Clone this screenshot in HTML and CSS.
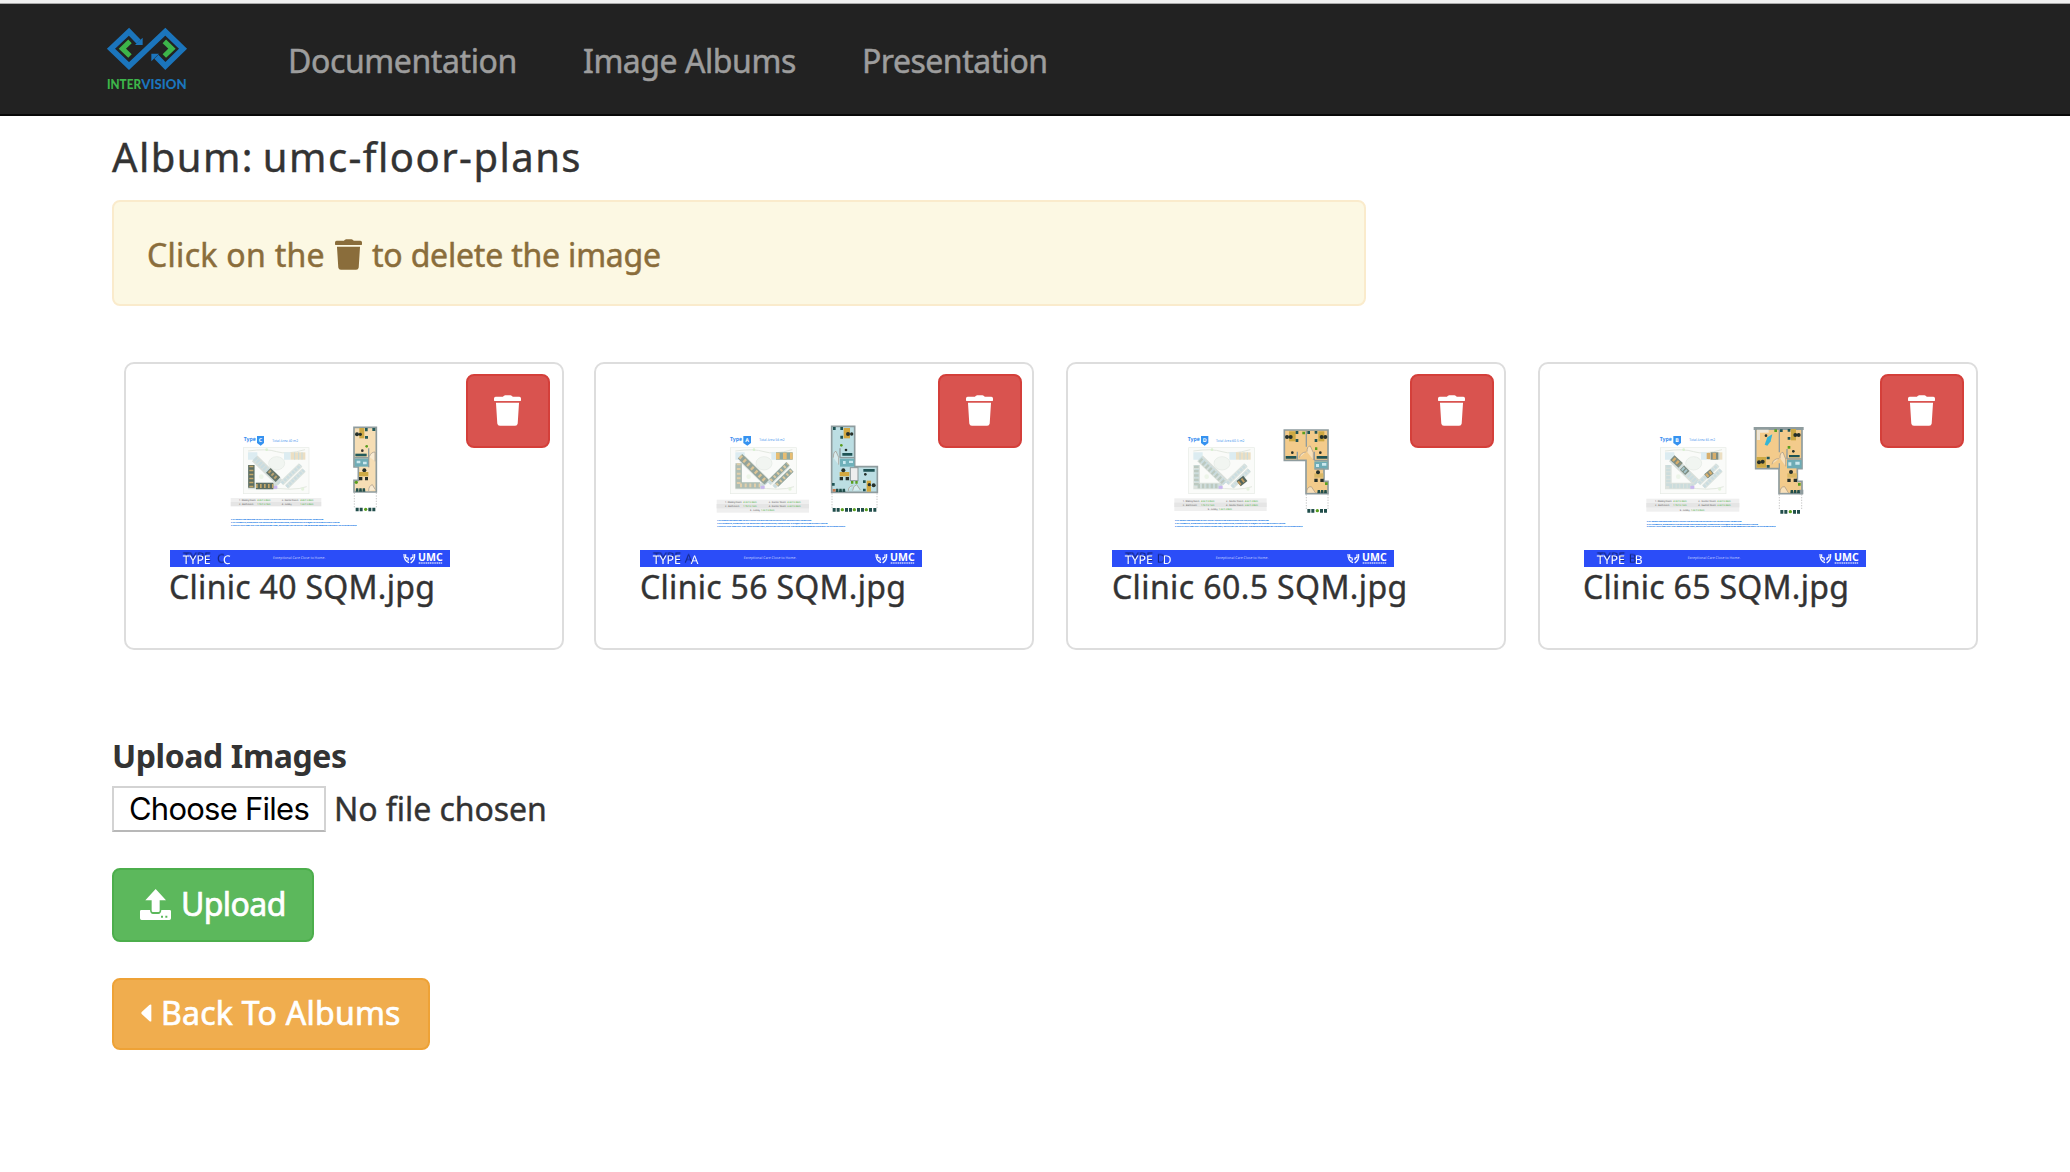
FILE: index.html
```html
<!DOCTYPE html>
<html lang="en">
<head>
<meta charset="utf-8">
<title>Album: umc-floor-plans</title>
<link rel="stylesheet" href="styles.css">
</head>
<body>
<svg class="defs" aria-hidden="true">
  <defs>
    <symbol id="trash" viewBox="0 0 82 93">
      <path d="M5 5H27Q30 0 34 0H50Q54 0 57 5H77Q82 5 82 10V15Q82 18 78 18H4Q0 18 0 15V10Q0 5 5 5ZM6 23H76L72 86Q71 93 64 93H18Q11 93 10 86Z" fill="currentColor"/>
    </symbol>
    <g id="site">
      <rect x="370" y="278" width="197" height="138" fill="#fafbf9" stroke="#e6ebe4" stroke-width="2"/>
      <path d="M384 288Q440 280 470 290T555 284M440 395Q520 410 560 395" fill="none" stroke="#e3e8e0" stroke-width="3"/>
      <ellipse cx="470" cy="325" rx="24" ry="20" fill="#f1f5f1" stroke="#e3e9e3" stroke-width="2"/>
      <path d="M384 292h28v22h-28zM492 292h20v22h-20z" fill="#dcecf1"/>
      <path d="M512 292h44v22h-44z" fill="#ecdfc3"/>
      <path d="M524 292v22M536 292v22M546 292v22" stroke="#c6dce0" stroke-width="3"/>
      <path d="M404 310L480 384" stroke="#d9dfda" stroke-width="24"/>
      <path d="M404 310L480 384" stroke="#c9dce0" stroke-width="15" stroke-dasharray="7 3"/>
      <path d="M485 385L542 330M500 396L552 345" stroke="#dde4df" stroke-width="15"/>
      <path d="M485 385L542 330M500 396L552 345" stroke="#cbdde1" stroke-width="9" stroke-dasharray="8 3"/>
      <path d="M394 330V393H470" fill="none" stroke="#dce2dd" stroke-width="20"/>
      <path d="M394 330V393H470" fill="none" stroke="#cbdcdc" stroke-width="13" stroke-dasharray="8 3"/>
      <circle cx="424" cy="365" r="7" fill="#edf5e9"/><circle cx="548" cy="402" r="5" fill="#e4f2dd"/><circle cx="440" cy="284" r="4" fill="#d9efd0"/>
      <path d="M460 397h12" stroke="#c9b7ef" stroke-width="9"/>
    </g>
    <g id="notes" class="notes">
      <text x="333" y="496" textLength="277" lengthAdjust="spacingAndGlyphs">* ALL ROOMS ARE MEASURED TO WALL FINISH AND EXCLUDE THE STANDARD AND CONSTRUCTION TOLERANCES</text>
      <text x="333" y="504" textLength="325" lengthAdjust="spacingAndGlyphs">* ALL MATERIALS, DIMENSIONS AND DRAWINGS ARE APPROXIMATE, INFORMATION IS SUBJECT TO CHANGE WITHOUT NOTICE</text>
      <text x="333" y="512" textLength="377" lengthAdjust="spacingAndGlyphs">* ACTUAL UNIT AREA MAY VARY FROM STATED AREA, DRAWINGS NOT TO SCALE. THE DEVELOPER RESERVES THE RIGHT TO MAKE REVISIONS</text>
    </g>
    <g id="umc" fill="#fff">
      <path d="M852 597q-1 20 15 26M857 598v9l9 3M866 611l-3 6M884 597q2 18-12 27M879 598v9l-8 3M875 608l-3 7" fill="none" stroke="#fff" stroke-width="3.5"/>
      <text x="894" y="618" font-size="32" font-weight="700" textLength="74" lengthAdjust="spacingAndGlyphs">UMC</text>
      <path d="M896 624h72" stroke="#c9d2ff" stroke-width="4" stroke-dasharray="4 1.5"/>
    </g>
    <g id="seats" fill="#214e4b"><path d="M0 0h7l1 10h-9zM10 0h7l1 10h-9zM20 0h7l1 10h-9z"/></g>
    <g id="bench"><g fill="#214e4b"><path d="M2 0h9v11H2zM14 0h9v11h-9zM40 0h9v11h-9zM52 0h9v11h-9z"/></g><circle cx="32" cy="5" r="5" fill="#5a9e1f"/></g>
  </defs>
</svg>

<div class="browser-edge"></div>
<nav class="navbar">
  <a class="brand">
    <svg width="80" height="62" viewBox="0 0 240 186" aria-label="Intervision">
      <g fill="none" stroke="#1b75bc" stroke-width="17">
        <path d="M95 41L66 11L12 62L66 114L175 11L228 62L175 114L148 86"/>
      </g>
      <path d="M107 29V51H84ZM133 77H156L133 100Z" fill="#1b75bc"/>
      <path d="M69 40L46 62L69 84M172 40L195 62L172 84" fill="none" stroke="#3db54a" stroke-width="15"/>
      <text x="0" y="182" fill="#3db54a" textLength="102" lengthAdjust="spacingAndGlyphs">INTER</text>
      <text x="103" y="182" fill="#1b75bc" textLength="136" lengthAdjust="spacingAndGlyphs">VISION</text>
    </svg>
  </a>
  <a class="nav-link docs">Documentation</a>
  <a class="nav-link albums">Image Albums</a>
  <a class="nav-link pres">Presentation</a>
</nav>

<main class="page">
  <h3 class="title">Album: umc-floor-plans</h3>
  <div class="alert"><span class="alert-a">Click on the</span><svg class="alert-icon"><use href="#trash"/></svg><span class="alert-b">to delete the image</span></div>

  <div class="cards">
    <div class="card">
      <button class="delete"><svg class="trash"><use href="#trash"/></svg></button>
      <svg class="thumb" width="280" height="152" viewBox="150 180 840 456">
        <use href="#site"/>
        <path d="M394 330V398M408 393H460" stroke="#5d6e62" stroke-width="19"/><path d="M394 332V398M408 393H460" stroke="#c4a76a" stroke-width="12" stroke-dasharray="5 7"/>
        <path d="M445 346L474 374" stroke="#66766b" stroke-width="20"/><path d="M447 348L472 372" stroke="#bba371" stroke-width="10" stroke-dasharray="6 6"/>
        <text class="ty" x="371" y="259" textLength="36" lengthAdjust="spacingAndGlyphs">Type</text><path class="badge" d="M411 243h21v21l-10 8-11-8z"/><text class="bl" x="416" y="261">C</text>
        <text class="area" x="457" y="260" textLength="77" lengthAdjust="spacingAndGlyphs">Total Area 40 m2</text>
        <rect x="332" y="429" width="272" height="12" fill="#efefef"/><rect x="332" y="441" width="272" height="13" fill="#e5e5e5"/>
        <g class="dims"><text x="357" y="438" textLength="50">1 - Waiting Room</text><text class="g" x="412" y="438" textLength="39">4.25 X 2.80m</text><text x="485" y="438" textLength="50">3 - Doctor Room</text><text class="g" x="541" y="438" textLength="39">4.05 X 2.80m</text><text x="357" y="450" textLength="43">2 - Bathroom</text><text class="g" x="412" y="450" textLength="39">1.70 X 2.15m</text><text x="485" y="450" textLength="30">4 - Lobby</text><text class="g" x="541" y="450" textLength="39">1.20 X 2.80m</text></g>
        <use href="#notes"/>
        <path class="wall cream" d="M702 217H769V411H702V376H715V336H702Z"/>
        <rect x="704" y="310" width="43" height="25" fill="#70adb7"/><path class="inner" d="M704 308H746V280M746 310V337"/>
        <rect x="718" y="219" width="15" height="31" fill="#cda944"/><g fill="#26302a"><circle cx="711" cy="238" r="6"/><circle cx="721" cy="238" r="5"/><circle cx="733" cy="346" r="6"/><path d="M717 366h10v10h-10zM735 366h9v10h-9z"/></g>
        <rect x="717" y="351" width="28" height="13" fill="#cda944"/><path d="M735 219h8v10h-8zM757 219h9v9h-9zM735 243h9v8h-9z" fill="#235a5a"/><path d="M706 300h34" stroke="#235a5a" stroke-width="8"/>
        <circle cx="740" cy="274" r="4" fill="#5a9e1f"/><circle cx="709" cy="382" r="5" fill="#5a9e1f"/><circle cx="727" cy="287" r="4" fill="#333"/><path d="M710 317h11v8h-11zM729 320h11v8h-11z" fill="#cce8ee"/>
        <path class="door" d="M748 305q5-14 17-14v28M746 408q0-16 11-19l9 15"/><use href="#seats" x="708" y="400"/>
        <path class="lot" d="M703 413V460M769 413V460"/><use href="#bench" x="705" y="458"/>
        <rect class="band" x="150" y="585" width="840" height="51"/><text class="tp" x="188" y="626" textLength="84" lengthAdjust="spacingAndGlyphs">TYPE</text><text class="tp letter" x="309" y="626">C</text>
        <text class="slogan" x="459" y="613" textLength="157" lengthAdjust="spacingAndGlyphs">Exceptional Care Close to Home.</text><use href="#umc"/>
      </svg>
      <div class="name">Clinic 40 SQM.jpg</div>
    </div>

    <div class="card near">
      <button class="delete"><svg class="trash"><use href="#trash"/></svg></button>
      <svg class="thumb" width="282" height="152" viewBox="150 180 846 456">
        <use href="#site" x="52"/>
        <g fill="none"><path d="M450 304L530 382" stroke="#93a39a" stroke-width="19"/><path d="M450 304L530 382" stroke="#dcc495" stroke-width="12" stroke-dasharray="7 9"/><path d="M542 377L594 326M560 390L606 345" stroke="#94a79f" stroke-width="14"/><path d="M542 377L594 326M560 390L606 345" stroke="#dfcaa0" stroke-width="9" stroke-dasharray="6 8"/><path d="M446 325V391H510" stroke="#aebdb3" stroke-width="19"/><path d="M446 325V391H510" stroke="#e1cfaa" stroke-width="11" stroke-dasharray="6 8"/><path d="M558 303h50" stroke="#8fa99f" stroke-width="22"/><path d="M558 303h50" stroke="#e7bd72" stroke-width="20" stroke-dasharray="11 10"/></g>
        <text class="ty" x="420" y="258" textLength="36" lengthAdjust="spacingAndGlyphs">Type</text><path class="badge" d="M460 243h23v21l-11 8-12-8z"/><text class="bl" x="466" y="260">A</text>
        <text class="area" x="508" y="259" textLength="76" lengthAdjust="spacingAndGlyphs">Total Area 56 m2</text>
        <rect x="380" y="434" width="277" height="39" fill="#efefef"/><rect x="380" y="447" width="277" height="13" fill="#e5e5e5"/>
        <g class="dims"><text x="405" y="444" textLength="50">1 - Waiting Room</text><text class="g" x="460" y="444" textLength="40">4.20 X 2.80m</text><text x="536" y="444" textLength="52">3 - Doctor Room</text><text class="g" x="592" y="444" textLength="40">4.00 X 2.80m</text><text x="405" y="456" textLength="43">2 - Bathroom</text><text class="g" x="460" y="456" textLength="40">1.70 X 2.10m</text><text x="536" y="456" textLength="52">4 - Doctor Room</text><text class="g" x="592" y="456" textLength="40">3.00 X 2.80m</text><text x="480" y="469" textLength="30">5 - Lobby</text><text class="g" x="513" y="469" textLength="40">1.20 X 2.80m</text></g>
        <use href="#notes" transform="translate(43 3) scale(1.017 1)"/>
        <path class="wall blue" d="M725 214H794V335H862V412H725Z"/>
        <rect x="750" y="311" width="43" height="24" fill="#6fb1ba"/><path class="inner" d="M750 308V280M750 308H793"/><rect x="781" y="338" width="23" height="39" fill="#eee" stroke="#8b9798" stroke-width="3"/>
        <rect x="761" y="219" width="19" height="31" fill="#d3a840"/><rect x="749" y="351" width="29" height="13" fill="#d3a840"/><rect x="830" y="377" width="13" height="33" fill="#d3a840"/>
        <g fill="#26302a"><circle cx="774" cy="237" r="6"/><circle cx="785" cy="237" r="5"/><circle cx="760" cy="346" r="6"/><circle cx="768" cy="285" r="4"/><circle cx="826" cy="358" r="4"/><circle cx="838" cy="389" r="5"/><circle cx="851" cy="391" r="6"/><path d="M749 366h10v10h-10zM767 366h10v10h-10z"/></g>
        <path d="M729 216h8v9h-8zM751 216h8v9h-8zM751 242h8v9h-8zM819 376h8v8h-8zM819 401h8v8h-8zM726 384h8v8h-8zM757 294h30v8h-30zM820 342h34v8h-34z" fill="#205455"/>
        <circle cx="754" cy="271" r="4" fill="#5a9e1f"/><path d="M783 382h7M796 382h7" stroke="#5a9e1f" stroke-width="8"/><path d="M759 318h8v9h-8zM777 317h12v7h-12z" fill="#c8e9f0"/>
        <path class="door" d="M730 308q0-18 8-19l8 18v22M775 408q0-14 13-16M788 407q1-15 12-18l11 16"/><use href="#seats" x="738" y="401"/><path d="M728 402h9v8h-9z" fill="#c67950"/>
        <path class="lot" d="M726 415V460M861 415V460"/><g fill="#214e4b"><path d="M728 459h9v11h-9zM740 459h9v11h-9zM765 459h9v11h-9zM777 459h9v11h-9zM801 459h9v11h-9zM813 459h9v11h-9zM837 459h9v11h-9zM850 459h9v11h-9z"/></g><g fill="#5a9e1f"><circle cx="757" cy="464" r="5"/><circle cx="793" cy="464" r="5"/><circle cx="829" cy="464" r="5"/></g>
        <rect class="band" x="150" y="585" width="846" height="51"/><text class="tp" x="188" y="626" textLength="85" lengthAdjust="spacingAndGlyphs">TYPE</text><text class="tp letter" x="302" y="626">A</text>
        <text class="slogan" x="461" y="613" textLength="158" lengthAdjust="spacingAndGlyphs">Exceptional Care Close to Home.</text><use href="#umc" x="6"/>
      </svg>
      <div class="name off">Clinic 56 SQM.jpg</div>
    </div>

    <div class="card near">
      <button class="delete"><svg class="trash"><use href="#trash"/></svg></button>
      <svg class="thumb" width="282" height="152" viewBox="156 180 846 456">
        <use href="#site" x="16"/>
        <path d="M536 386L556 370" stroke="#55675e" stroke-width="20"/><path d="M536 386L556 370" stroke="#be9b60" stroke-width="13" stroke-dasharray="6 7"/>
        <path d="M420 314L490 382M409 332V393H478" fill="none" stroke="#bcc9c0" stroke-width="14" stroke-dasharray="7 6"/>
        <text class="ty" x="383" y="259" textLength="36" lengthAdjust="spacingAndGlyphs">Type</text><path class="badge" d="M423 243h22v21l-11 8-11-8z"/><text class="bl" x="428" y="261">D</text>
        <text class="area" x="468" y="260" textLength="85" lengthAdjust="spacingAndGlyphs">Total Area 60.5 m2</text>
        <rect x="343" y="430" width="277" height="38" fill="#efefef"/><rect x="343" y="443" width="277" height="13" fill="#e5e5e5"/>
        <g class="dims"><text x="368" y="440" textLength="50">1 - Waiting Room</text><text class="g" x="423" y="440" textLength="40">4.20 X 2.80m</text><text x="498" y="440" textLength="52">3 - Doctor Room</text><text class="g" x="554" y="440" textLength="40">4.00 X 2.80m</text><text x="368" y="452" textLength="43">2 - Bathroom</text><text class="g" x="423" y="452" textLength="40">1.70 X 2.10m</text><text x="498" y="452" textLength="52">4 - Doctor Room</text><text class="g" x="554" y="452" textLength="40">3.00 X 2.80m</text><text x="443" y="465" textLength="30">5 - Lobby</text><text class="g" x="476" y="465" textLength="40">1.20 X 2.80m</text></g>
        <use href="#notes" transform="translate(6 3) scale(1.017 1)"/>
        <path class="wall tan" d="M673 225H804V342H792V379H804V416H738V316H673Z"/>
        <rect x="763" y="319" width="40" height="22" fill="#6dabb5"/><path class="inner" d="M739 227V275M712 314V290M763 316V290M763 316H803M763 342H792"/>
        <rect x="687" y="229" width="20" height="30" fill="#cda944"/><rect x="775" y="229" width="18" height="30" fill="#cda944"/><rect x="763" y="355" width="27" height="13" fill="#d9b765"/>
        <g fill="#26302a"><circle cx="681" cy="246" r="6"/><circle cx="692" cy="246" r="6"/><circle cx="785" cy="246" r="6"/><circle cx="796" cy="246" r="6"/><circle cx="697" cy="293" r="4"/><circle cx="781" cy="293" r="4"/><circle cx="774" cy="352" r="6"/><path d="M763 371h10v10h-10zM781 371h10v10h-10z"/></g>
        <path d="M707 228h8v9h-8zM742 228h8v9h-8zM707 252h8v9h-8zM764 252h8v9h-8zM764 228h8v8h-8zM677 303h32v8h-32zM770 303h32v8h-32z" fill="#205455"/><path d="M727 234h8M765 281h7M795 386h8" stroke="#5a9e1f" stroke-width="8"/><path d="M768 327h9v9h-9zM786 324h13v8h-13z" fill="#cce8ee"/>
        <path class="door" d="M718 308q4-16 20-17M741 290q0-17 10-17l9 20v22M740 414q0-20 14-19l12 18"/><use href="#seats" x="773" y="405"/>
        <path class="lot" d="M739 418V462M804 418V462"/><use href="#bench" x="740" y="462"/>
        <rect class="band" x="156" y="585" width="846" height="51"/><text class="tp" x="194" y="626" textLength="85" lengthAdjust="spacingAndGlyphs">TYPE</text><text class="tp letter" x="308" y="626">D</text>
        <text class="slogan" x="467" y="613" textLength="158" lengthAdjust="spacingAndGlyphs">Exceptional Care Close to Home.</text><use href="#umc" x="12"/>
      </svg>
      <div class="name off wide">Clinic 60.5 SQM.jpg</div>
    </div>

    <div class="card">
      <button class="delete"><svg class="trash"><use href="#trash"/></svg></button>
      <svg class="thumb" width="282" height="152" viewBox="162 180 846 456">
        <use href="#site" x="21"/>
        <g stroke="#7f8d82"><path d="M427 308L452 331" stroke-width="19"/><path d="M456 338L472 354" stroke-width="18"/><path d="M528 364L546 349" stroke-width="17"/><path d="M542 303h23" stroke-width="22"/></g><g stroke="#d7ae6b"><path d="M430 311L450 329" stroke-width="12" stroke-dasharray="7 6"/><path d="M529 363L545 350" stroke-width="11" stroke-dasharray="7 5"/><path d="M530 303h30" stroke-width="18" stroke-dasharray="10 8"/></g><path d="M457 340L470 352" stroke="#a5c4c9" stroke-width="12" stroke-dasharray="6 4"/>
        <text class="ty" x="389" y="258" textLength="36" lengthAdjust="spacingAndGlyphs">Type</text><path class="badge" d="M430 243h23v21l-11 8-12-8z"/><text class="bl" x="436" y="260">B</text>
        <text class="area" x="478" y="259" textLength="77" lengthAdjust="spacingAndGlyphs">Total Area 65 m2</text>
        <rect x="349" y="431" width="279" height="39" fill="#efefef"/><rect x="349" y="444" width="279" height="13" fill="#e5e5e5"/>
        <g class="dims"><text x="375" y="441" textLength="50">1 - Waiting Room</text><text class="g" x="430" y="441" textLength="40">4.20 X 2.80m</text><text x="505" y="441" textLength="53">3 - Doctor Room</text><text class="g" x="562" y="441" textLength="40">4.00 X 2.80m</text><text x="375" y="454" textLength="43">2 - Bathroom</text><text class="g" x="430" y="454" textLength="40">1.70 X 2.10m</text><text x="505" y="454" textLength="53">4 - Dentist Room</text><text class="g" x="562" y="454" textLength="40">3.00 X 2.80m</text><text x="449" y="467" textLength="30">5 - Lobby</text><text class="g" x="483" y="467" textLength="40">1.20 X 2.80m</text></g>
        <use href="#notes" transform="translate(9 5) scale(1.025 1)"/>
        <path class="wall tan" d="M677 220H816V341H802V379H816V416H747V341H677Z"/><path d="M671 216h150v9H671zM808 404h12v14h-12z" fill="#8f9c9e"/>
        <rect x="771" y="315" width="44" height="25" fill="#6dabb5"/><path class="inner" d="M748 223V292M771 312V282M771 312H815M748 325V341"/>
        <path d="M681 224h35v9h-26v22h-9z" fill="#eee5d4"/><path d="M704 269l8-22 15-9-5 21-10 13z" fill="#35b5d4"/>
        <rect x="680" y="306" width="28" height="32" fill="#cda944"/><rect x="783" y="222" width="15" height="34" fill="#cda944"/><rect x="772" y="355" width="29" height="13" fill="#d9b765"/>
        <g fill="#26302a"><circle cx="687" cy="322" r="6"/><circle cx="698" cy="320" r="6"/><circle cx="796" cy="240" r="6"/><circle cx="806" cy="240" r="6"/><circle cx="708" cy="242" r="4"/><circle cx="790" cy="289" r="4"/><circle cx="783" cy="351" r="6"/><path d="M772 371h10v10h-10zM791 371h10v10h-10z"/></g>
        <path d="M710 305h9v8h-9zM710 330h9v8h-9zM750 223h8v8h-8zM773 222h8v8h-8zM773 246h8v8h-8zM777 300h32v7h-32z" fill="#205455"/><path d="M733 227h8M773 277h8M804 388h8" stroke="#5a9e1f" stroke-width="8"/><path d="M775 322h9v10h-9zM796 320h13v9h-13z" fill="#cce8ee"/>
        <path class="door" d="M726 328q4-18 21-17M750 310q-1-18 9-18l8 20v22M750 414q0-20 14-19l11 18"/><use href="#seats" x="782" y="405"/>
        <path class="lot" d="M748 418V464M815 418V464"/><use href="#bench" x="749" y="465"/>
        <rect class="band" x="162" y="585" width="846" height="51"/><text class="tp" x="200" y="626" textLength="85" lengthAdjust="spacingAndGlyphs">TYPE</text><text class="tp letter" x="314" y="626">B</text>
        <text class="slogan" x="473" y="613" textLength="158" lengthAdjust="spacingAndGlyphs">Exceptional Care Close to Home.</text><use href="#umc" x="18"/>
      </svg>
      <div class="name">Clinic 65 SQM.jpg</div>
    </div>
  </div>

  <form class="upload">
    <div class="label">Upload Images</div>
    <div class="file"><span class="choose">Choose Files</span><span class="none">No file chosen</span></div>
    <a class="btn success"><svg width="31" height="31" viewBox="0 0 93 93"><path d="M47 0L78 34H59V65Q59 69 55 69H39Q35 69 35 65V34H16Z" fill="#fff"/><path d="M4 63H30Q31 75 39 75H55Q63 75 64 63H89Q93 63 93 67V88Q93 93 88 93H5Q0 93 0 88V67Q0 63 4 63ZM63 80V86H69V80ZM76 80V86H82V80Z" fill="#fff" fill-rule="evenodd"/></svg><span>Upload</span></a>
    <a class="btn warning"><svg width="11" height="18" viewBox="0 0 33 54"><path d="M31 2V52Q28 54 25 51L2 30Q0 27 2 24L25 3Q28 0 31 2Z" fill="#fff"/></svg><span>Back To Albums</span></a>
  </form>
</main>
</body>
</html>
```
FILE: styles.css
```css
* { box-sizing: border-box; }
body {
  margin: 0;
  background: #fff;
  color: #333;
  font: 32px/44px "Noto Sans", "Open Sans", sans-serif;
}
.defs { display: block; width: 0; height: 0; }
.browser-edge { height: 4px; background: #f0f0f0; border-bottom: 1px solid #a9a9a9; }

.navbar {
  display: flex;
  align-items: center;
  height: 112px;
  padding-left: 107px;
  background: #222;
  border-bottom: 2px solid #080808;
}
.brand { display: block; height: 62px; margin-right: 101px; }
.brand svg { display: block; overflow: visible; }
.brand text { font-family: Lato, sans-serif; font-weight: 900; font-size: 42px; }
.nav-link { padding-top: 3px; color: #9d9d9d; white-space: nowrap; -webkit-text-stroke: .5px; }
.docs { width: 295px; letter-spacing: -.4px; }
.albums { width: 279px; letter-spacing: -.45px; }
.pres { letter-spacing: -.5px; }

.page { padding: 15px 0 0 112px; }
.title {
  margin: 0;
  font-size: 40px;
  line-height: 52px;
  font-weight: 400;
  letter-spacing: 1.45px;
  word-spacing: -3px;
  -webkit-text-stroke: .4px;
}

.alert {
  display: flex;
  align-items: center;
  width: 1254px;
  height: 106px;
  margin-top: 17px;
  padding-left: 33px;
  color: #8a6d3b;
  background: #fcf8e3;
  border: 2px solid #faebcc;
  border-radius: 8px;
  -webkit-text-stroke: .5px;
}
.alert-a { width: 188px; padding-top: 3px; letter-spacing: .3px; white-space: nowrap; }
.alert-icon { width: 27px; height: 31px; margin: 2px 10px 0 0; }
.alert-b { padding-top: 3px; letter-spacing: -.2px; }

.cards {
  display: grid;
  grid-template-columns: 470px 472px 472px 440px;
  margin: 56px 0 0 12px;
}
.card {
  position: relative;
  width: 440px;
  height: 288px;
  padding: 51px 0 0 44px;
  border: 2px solid #ddd;
  border-radius: 10px;
}
.delete {
  position: absolute;
  top: 10px;
  right: 12px;
  width: 84px;
  height: 74px;
  padding: 0;
  color: #fff;
  background: #d9534f;
  border: 2px solid #d43f3a;
  border-radius: 8px;
}
.near .delete { right: 10px; }
.trash { display: block; width: 27px; height: 31px; margin: -1px 0 0 26px; }
.thumb { display: block; }
.name {
  padding-top: 2px;
  margin-left: -1px;
  line-height: 36px;
  white-space: nowrap;
  letter-spacing: .3px;
  -webkit-text-stroke: .4px;
}
.name.off { margin-left: 0; }
.name.wide { letter-spacing: .4px; }

.thumb text { font-family: "Noto Sans", sans-serif; text-rendering: geometricPrecision; }
.thumb .ty { font-size: 17px; font-weight: 700; fill: #3b8df0; }
.thumb .bl { font-size: 16px; font-weight: 700; fill: #fff; }
.badge { fill: #3592f0; }
.thumb .area { font-size: 11px; fill: #4795ee; }
.notes { fill: #2f86ea; stroke: #2f86ea; stroke-width: .4px; font-size: 7.4px; }
.dims { font-size: 7px; fill: #555; }
.dims .g { fill: #3aac32; }
.wall { stroke: #8f9c9e; stroke-width: 5px; }
.cream { fill: #f6deb5; }
.tan { fill: #f3cb8b; }
.blue { fill: #bcdee3; }
.inner { fill: none; stroke: #8f9c9e; stroke-width: 4px; }
.door { fill: #fff6; stroke: #9e9488; stroke-width: 2px; }
.lot { stroke: #aaa; stroke-width: 2px; stroke-dasharray: 4px 4px; }
.band { fill: #2b4df8; }
.thumb .tp { font-size: 36px; fill: #fff; filter: drop-shadow(1px -9px 1px #142683); }
.thumb .letter { filter: drop-shadow(-18px -4px 1px #142683); }
.thumb .slogan { font-size: 11px; fill: #c3ceff; }

.upload { margin-top: 84px; }
.label { font-weight: 700; letter-spacing: -.4px; }
.file { display: flex; align-items: center; height: 46px; margin-top: 8px; line-height: 42px; }
.choose {
  width: 214px;
  height: 46px;
  color: #000;
  font-family: Inter, sans-serif;
  font-size: 31px;
  letter-spacing: -.75px;
  text-align: center;
  white-space: nowrap;
  background: #fff;
  border: 2px solid #d3d3d3;
  border-bottom-color: #b8b8b8;
}
.none { padding: 0 0 1px 8px; letter-spacing: -.05px; -webkit-text-stroke: .4px; }
.btn {
  display: flex;
  align-items: center;
  height: 74px;
  margin-top: 36px;
  padding: 0 0 2px 26px;
  color: #fff;
  white-space: nowrap;
  border: 2px solid;
  border-radius: 8px;
  -webkit-text-stroke: .7px;
}
.success { width: 202px; background: #5cb85c; border-color: #4cae4c; }
.success span { padding-left: 10px; letter-spacing: -.6px; }
.warning { width: 318px; height: 72px; padding-left: 27px; background: #f0ad4e; border-color: #eea236; }
.warning span { padding-left: 9px; letter-spacing: .25px; }
```
